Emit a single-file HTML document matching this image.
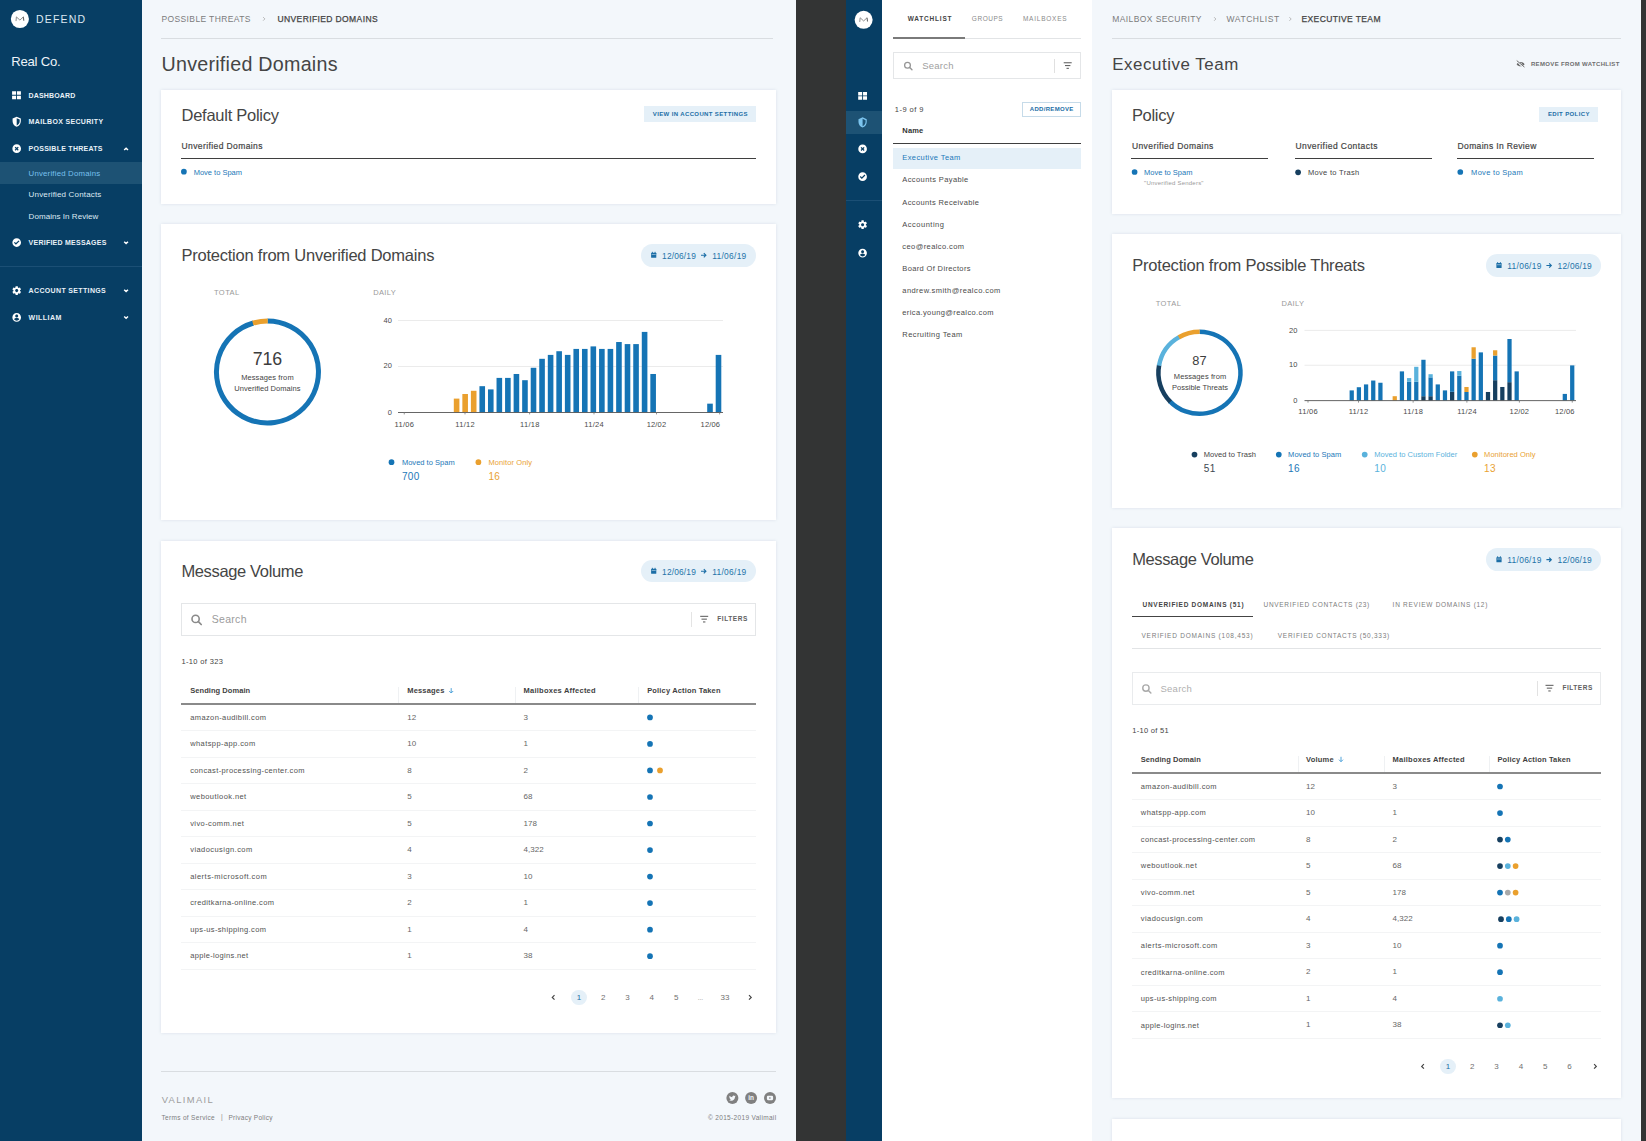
<!DOCTYPE html>
<html lang="en"><head><meta charset="utf-8"><title>Valimail Defend</title>
<style>
html,body{margin:0;padding:0}
body{width:1646px;height:1141px;overflow:hidden;position:relative;background:#333434;font-family:"Liberation Sans",sans-serif;}
#root{position:absolute;left:0;top:0;width:1646px;height:1141px;overflow:hidden}
#root>div,#root>span,#root>svg{position:absolute;display:block}
#root>span{white-space:nowrap}
svg{overflow:visible}
</style></head>
<body><div id="root">
<div style="left:0.00px;top:0.00px;width:796.00px;height:1141.00px;background:#f3f7fb;"></div>
<div style="left:0.00px;top:0.00px;width:141.50px;height:1141.00px;background:#073e64;"></div>
<svg style="left:9px;top:8px;" width="21" height="22" viewBox="-10.9000 -11.0000 21.0000 22.0000"><circle cx="0" cy="0" r="9.05" fill="#fff"/><path d="M-3.900 2.100-3.500-2.100 0 1.100 3.400-2.100" fill="none" stroke="#909090" stroke-width="1"/><path d="M3.400-2.100 3.900 1.700" fill="none" stroke="#666" stroke-width="1.100"/></svg>
<span style="top:11.80px;font-size:10.5px;line-height:15px;color:#dde8f1;letter-spacing:1.166px;left:36.10px;">DEFEND</span>
<span style="top:53.20px;font-size:13.1px;line-height:18px;color:#eef4f9;letter-spacing:-0.236px;left:11.30px;">Real Co.</span>
<div style="left:0.00px;top:162.40px;width:141.50px;height:21.80px;background:#1d5274;"></div>
<div style="left:0.00px;top:266.00px;width:141.50px;height:1.00px;background:#1b4f75;"></div>
<svg style="left:10px;top:89px;" width="13" height="13" viewBox="-2.7170 -2.2642 29.4340 29.4340"><g fill="#fff"><path d="M2 3h9v8H2zM13 3h9v8h-9zM2 13h9v8H2zM13 13h9v8h-9z"/></g></svg>
<span style="top:90.50px;font-size:7px;line-height:10px;color:#e9f1f8;font-weight:700;letter-spacing:0.138px;left:28.60px;">DASHBOARD</span>
<svg style="left:10px;top:115px;" width="14" height="14" viewBox="-2.6182 -2.8364 30.5455 30.5455"><g fill="#fff"><path d="M12 1 3 5v6c0 5.6 3.8 10.7 9 12 5.200-1.300 9-6.400 9-12V5l-9-4zm0 3.200 6.500 2.900V11c0 4.100-2.700 8-6.500 9.300V4.200z"/></g></svg>
<span style="top:116.70px;font-size:7px;line-height:10px;color:#e9f1f8;font-weight:700;letter-spacing:0.325px;left:28.60px;">MAILBOX SECURITY</span>
<svg style="left:10px;top:142px;" width="13" height="13" viewBox="-3.4615 -3.4615 30.0000 30.0000"><g fill="#fff"><path d="M12 2C6.480 2 2 6.480 2 12s4.480 10 10 10 10-4.480 10-10S17.520 2 12 2zm4.600 12.500-2.100 2.100L12 14.100l-2.500 2.500-2.100-2.100L9.900 12 7.400 9.500l2.100-2.100L12 9.900l2.500-2.500 2.100 2.100L14.100 12z"/></g></svg>
<span style="top:143.50px;font-size:7px;line-height:10px;color:#e9f1f8;font-weight:700;letter-spacing:0.267px;left:28.60px;">POSSIBLE THREATS</span>
<svg style="left:120px;top:143px;" width="13" height="13" viewBox="-6.1000 -6.1000 13.0000 13.0000"><path d="M-1.9 0.95 L0 -0.95 L1.9 0.95" fill="none" stroke="#fff" stroke-width="1.4"/></svg>
<span style="top:167.50px;font-size:7.8px;line-height:11px;color:#78c0ee;letter-spacing:0.203px;left:28.60px;">Unverified Domains</span>
<span style="top:189.00px;font-size:8px;line-height:12px;color:#dde9f3;letter-spacing:0.160px;left:28.60px;">Unverified Contacts</span>
<span style="top:211.10px;font-size:8px;line-height:12px;color:#dde9f3;letter-spacing:0.049px;left:28.60px;">Domains In Review</span>
<svg style="left:10px;top:236px;" width="13" height="13" viewBox="-3.4615 -3.2308 30.0000 30.0000"><g fill="#fff"><path d="M12 2C6.480 2 2 6.480 2 12s4.480 10 10 10 10-4.480 10-10S17.520 2 12 2zm-1.800 15.200-4.600-4.600 2-2 2.600 2.600 6.200-6.200 2 2z"/></g></svg>
<span style="top:237.70px;font-size:7px;line-height:10px;color:#e9f1f8;font-weight:700;letter-spacing:0.243px;left:28.60px;">VERIFIED MESSAGES</span>
<svg style="left:120px;top:236px;" width="13" height="13" viewBox="-6.1000 -6.6000 13.0000 13.0000"><path d="M-1.9 -0.95 L0 0.95 L1.9 -0.95" fill="none" stroke="#fff" stroke-width="1.4"/></svg>
<svg style="left:10px;top:284px;" width="13" height="13" viewBox="-3.1698 -2.9434 29.4340 29.4340"><g fill="#fff"><path d="M19.430 12.980c.040-.320.070-.640.070-.980s-.030-.660-.070-.980l2.110-1.650c.190-.150.240-.420.120-.640l-2-3.460c-.120-.220-.390-.300-.610-.220l-2.490 1c-.520-.400-1.080-.730-1.690-.980l-.380-2.650C14.460 2.180 14.250 2 14 2h-4c-.250 0-.460.180-.490.420l-.380 2.650c-.610.250-1.170.590-1.690.980l-2.490-1c-.230-.090-.490 0-.610.220l-2 3.460c-.130.220-.070.490.120.640l2.110 1.650c-.040.320-.070.650-.070.980s.030.660.070.980l-2.110 1.650c-.190.150-.240.420-.120.640l2 3.460c.120.220.390.300.610.220l2.490-1c.520.400 1.080.730 1.690.980l.380 2.650c.030.240.240.420.490.420h4c.250 0 .460-.180.490-.420l.380-2.650c.610-.250 1.170-.590 1.690-.980l2.490 1c.230.090.490 0 .610-.220l2-3.460c.120-.220.070-.490-.120-.640l-2.110-1.650zM12 15.500c-1.930 0-3.500-1.570-3.500-3.500s1.570-3.500 3.500-3.500 3.500 1.570 3.500 3.500-1.570 3.500-3.500 3.500z"/></g></svg>
<span style="top:285.70px;font-size:7px;line-height:10px;color:#e9f1f8;font-weight:700;letter-spacing:0.350px;left:28.60px;">ACCOUNT SETTINGS</span>
<svg style="left:120px;top:284px;" width="13" height="13" viewBox="-6.1000 -6.6000 13.0000 13.0000"><path d="M-1.9 -0.95 L0 0.95 L1.9 -0.95" fill="none" stroke="#fff" stroke-width="1.4"/></svg>
<svg style="left:10px;top:311px;" width="13" height="13" viewBox="-3.4615 -2.7692 30.0000 30.0000"><g fill="#fff"><path d="M12 2C6.480 2 2 6.480 2 12s4.480 10 10 10 10-4.480 10-10S17.520 2 12 2zm0 3.500c1.930 0 3.500 1.570 3.500 3.500S13.930 12.500 12 12.500 8.500 10.930 8.500 9 10.070 5.500 12 5.500zm0 14.200c-2.500 0-4.710-1.280-6-3.220.030-1.990 4-3.080 6-3.080 1.990 0 5.970 1.090 6 3.080-1.290 1.940-3.500 3.220-6 3.220z"/></g></svg>
<span style="top:312.50px;font-size:7px;line-height:10px;color:#e9f1f8;font-weight:700;letter-spacing:0.477px;left:28.60px;">WILLIAM</span>
<svg style="left:120px;top:311px;" width="13" height="13" viewBox="-6.1000 -6.4000 13.0000 13.0000"><path d="M-1.9 -0.95 L0 0.95 L1.9 -0.95" fill="none" stroke="#fff" stroke-width="1.4"/></svg>
<span style="top:12.90px;font-size:8.5px;line-height:12px;color:#7b7b7b;letter-spacing:0.374px;left:161.50px;">POSSIBLE THREATS</span>
<svg style="left:258px;top:12px;" width="12" height="13" viewBox="-6.0000 -6.9000 12.0000 13.0000"><path d="M-0.9 -1.8 L0.9 0 L-0.9 1.8" fill="none" stroke="#aaa" stroke-width="0.8"/></svg>
<span style="top:12.90px;font-size:8.5px;line-height:12px;color:#444;letter-spacing:0.387px;left:277.50px;-webkit-text-stroke:0.25px #444;">UNVERIFIED DOMAINS</span>
<div style="left:161.00px;top:38.00px;width:612.00px;height:1.00px;background:#d9dde1;"></div>
<span style="top:50.50px;font-size:19.7px;line-height:26px;color:#454545;letter-spacing:0.247px;left:161.50px;">Unverified Domains</span>
<div style="left:161.30px;top:90.00px;width:614.90px;height:114.20px;background:#fff;box-shadow:0 0 3px rgba(150,170,190,.28);"></div>
<span style="top:104.00px;font-size:16.5px;line-height:22px;color:#454545;letter-spacing:-0.261px;left:181.50px;">Default Policy</span>
<div style="left:644.10px;top:106.40px;width:112.10px;height:15.50px;background:#e5f0f8;"></div>
<span style="top:109.70px;font-size:6px;line-height:9px;color:#1c6ea6;font-weight:700;letter-spacing:0.373px;left:652.80px;">VIEW IN ACCOUNT SETTINGS</span>
<span style="top:139.60px;font-size:8.5px;line-height:12px;color:#444;letter-spacing:0.402px;left:181.50px;-webkit-text-stroke:0.2px #444;">Unverified Domains</span>
<div style="left:181.00px;top:158.00px;width:575.00px;height:1.00px;background:#3f3f3f;"></div>
<svg style="left:178px;top:166px;" width="11" height="11" viewBox="-5.9000 -5.7000 11.0000 11.0000"><circle cx="0" cy="0" r="2.85" fill="#1574b5"/></svg>
<span style="top:166.50px;font-size:7.5px;line-height:11px;color:#1c78b8;letter-spacing:-0.005px;left:193.70px;">Move to Spam</span>
<div style="left:161.30px;top:223.50px;width:614.90px;height:296.20px;background:#fff;box-shadow:0 0 3px rgba(150,170,190,.28);"></div>
<span style="top:244.00px;font-size:16.5px;line-height:22px;color:#454545;letter-spacing:-0.225px;left:181.40px;">Protection from Unverified Domains</span>
<div style="left:641.00px;top:243.70px;width:114.90px;height:23.00px;background:#e5f0f8;border-radius:11.5px;"></div>
<svg style="left:648px;top:250px;" width="11" height="10" viewBox="-5.7000 -5.0000 11.0000 10.0000"><g fill="#1c6ea6"><rect x="-2.600" y="-2.200" width="5.200" height="5" rx="0.500"/><rect x="-1.800" y="-3.200" width="0.900" height="1.600"/><rect x="0.900" y="-3.200" width="0.900" height="1.600"/></g><rect x="-2" y="-0.700" width="4" height="0.500" fill="#e5f0f8"/></svg>
<span style="top:249.60px;font-size:8.4px;line-height:12px;color:#2373a8;letter-spacing:0.156px;left:662.10px;">12/06/19</span>
<svg style="left:698px;top:250px;" width="11" height="11" viewBox="-5.6000 -5.2000 11.0000 11.0000"><path d="M-2.600 0H2.200M0.200-2.100 2.300 0 0.200 2.100" fill="none" stroke="#1c6ea6" stroke-width="1.150"/></svg>
<span style="top:249.60px;font-size:8.4px;line-height:12px;color:#2373a8;letter-spacing:0.302px;left:712.20px;">11/06/19</span>
<span style="top:287.30px;font-size:7.5px;line-height:11px;color:#9a9a9a;letter-spacing:0.429px;left:214.00px;">TOTAL</span>
<span style="top:287.30px;font-size:7.5px;line-height:11px;color:#9a9a9a;letter-spacing:0.344px;left:373.20px;">DAILY</span>
<svg style="left:206px;top:311px;" width="122" height="122" viewBox="-1.0000 -1.0000 122.0000 122.0000"><path d="M60.45 9.00A51 51 0 1 1 46.39 10.98" fill="none" stroke="#1574b5" stroke-width="5"/><path d="M45.88 11.13A51 51 0 0 1 60.72 9.00" fill="none" stroke="#eaa02e" stroke-width="5"/></svg>
<span style="top:347.80px;font-size:17.8px;line-height:23px;color:#3d3d3d;letter-spacing:-0.136px;left:267.43px;transform:translateX(-50%);">716</span>
<span style="top:371.70px;font-size:7.5px;line-height:11px;color:#444;letter-spacing:0.102px;left:267.45px;transform:translateX(-50%);">Messages from</span>
<span style="top:382.70px;font-size:7.5px;line-height:11px;color:#444;letter-spacing:0.044px;left:267.42px;transform:translateX(-50%);">Unverified Domains</span>
<svg style="left:-1px;top:-1px;" width="798" height="522" viewBox="-1.0000 -1.0000 798.0000 522.0000"><rect x="398" y="320.200" width="325" height="0.800" fill="#e6e6e6"/><rect x="398" y="366.100" width="325" height="0.800" fill="#e6e6e6"/><rect x="453.80" y="398.60" width="5.600" height="13.80" fill="#eaa02e"/><rect x="462.35" y="394.00" width="5.600" height="18.40" fill="#eaa02e"/><rect x="470.89" y="390.78" width="5.600" height="21.62" fill="#eaa02e"/><rect x="479.44" y="386.18" width="5.600" height="26.22" fill="#1574b5"/><rect x="487.98" y="389.40" width="5.600" height="23.00" fill="#1574b5"/><rect x="496.53" y="377.90" width="5.600" height="34.50" fill="#1574b5"/><rect x="505.07" y="377.90" width="5.600" height="34.50" fill="#1574b5"/><rect x="513.62" y="373.99" width="5.600" height="38.41" fill="#1574b5"/><rect x="522.16" y="380.20" width="5.600" height="32.20" fill="#1574b5"/><rect x="530.71" y="367.78" width="5.600" height="44.62" fill="#1574b5"/><rect x="539.25" y="358.81" width="5.600" height="53.59" fill="#1574b5"/><rect x="547.80" y="354.90" width="5.600" height="57.50" fill="#1574b5"/><rect x="556.34" y="351.22" width="5.600" height="61.18" fill="#1574b5"/><rect x="564.88" y="354.90" width="5.600" height="57.50" fill="#1574b5"/><rect x="573.43" y="348.92" width="5.600" height="63.48" fill="#1574b5"/><rect x="581.98" y="348.92" width="5.600" height="63.48" fill="#1574b5"/><rect x="590.52" y="346.39" width="5.600" height="66.01" fill="#1574b5"/><rect x="599.07" y="348.92" width="5.600" height="63.48" fill="#1574b5"/><rect x="607.61" y="348.92" width="5.600" height="63.48" fill="#1574b5"/><rect x="616.15" y="342.02" width="5.600" height="70.38" fill="#1574b5"/><rect x="624.70" y="344.09" width="5.600" height="68.31" fill="#1574b5"/><rect x="633.25" y="344.09" width="5.600" height="68.31" fill="#1574b5"/><rect x="641.79" y="331.90" width="5.600" height="80.50" fill="#1574b5"/><rect x="650.34" y="373.99" width="5.600" height="38.41" fill="#1574b5"/><rect x="707.20" y="403.66" width="5.600" height="8.74" fill="#1574b5"/><rect x="715.70" y="354.90" width="5.600" height="57.50" fill="#1574b5"/><rect x="398" y="412.0" width="325" height="0.900" fill="#555"/><rect x="403.8" y="412.4" width="0.800" height="2" fill="#777"/><rect x="464.6" y="412.4" width="0.800" height="2" fill="#777"/><rect x="529.3000000000001" y="412.4" width="0.800" height="2" fill="#777"/><rect x="593.6" y="412.4" width="0.800" height="2" fill="#777"/><rect x="656.0" y="412.4" width="0.800" height="2" fill="#777"/><rect x="719.3000000000001" y="412.4" width="0.800" height="2" fill="#777"/></svg>
<span style="top:315.10px;font-size:7.5px;line-height:11px;color:#4a4a4a;left:391.90px;transform:translateX(-100%);">40</span>
<span style="top:360.40px;font-size:7.5px;line-height:11px;color:#4a4a4a;left:391.90px;transform:translateX(-100%);">20</span>
<span style="top:407.00px;font-size:7.5px;line-height:11px;color:#4a4a4a;left:391.90px;transform:translateX(-100%);">0</span>
<span style="top:419.00px;font-size:7.5px;line-height:11px;color:#4a4a4a;letter-spacing:0.320px;left:404.36px;transform:translateX(-50%);">11/06</span>
<span style="top:419.00px;font-size:7.5px;line-height:11px;color:#4a4a4a;letter-spacing:0.320px;left:465.16px;transform:translateX(-50%);">11/12</span>
<span style="top:419.00px;font-size:7.5px;line-height:11px;color:#4a4a4a;letter-spacing:0.320px;left:529.86px;transform:translateX(-50%);">11/18</span>
<span style="top:419.00px;font-size:7.5px;line-height:11px;color:#4a4a4a;letter-spacing:0.320px;left:594.16px;transform:translateX(-50%);">11/24</span>
<span style="top:419.00px;font-size:7.5px;line-height:11px;color:#4a4a4a;letter-spacing:0.180px;left:656.49px;transform:translateX(-50%);">12/02</span>
<span style="top:419.00px;font-size:7.5px;line-height:11px;color:#4a4a4a;letter-spacing:0.180px;left:710.39px;transform:translateX(-50%);">12/06</span>
<svg style="left:386px;top:457px;" width="11" height="11" viewBox="-5.5000 -5.2000 11.0000 11.0000"><circle cx="0" cy="0" r="2.85" fill="#1574b5"/></svg>
<span style="top:457.00px;font-size:7.5px;line-height:11px;color:#1c78b8;letter-spacing:0.022px;left:401.90px;">Moved to Spam</span>
<span style="top:469.50px;font-size:10px;line-height:14px;color:#1c78b8;letter-spacing:0.406px;left:401.90px;">700</span>
<svg style="left:473px;top:457px;" width="11" height="11" viewBox="-5.4000 -5.2000 11.0000 11.0000"><circle cx="0" cy="0" r="2.85" fill="#eaa02e"/></svg>
<span style="top:457.00px;font-size:7.5px;line-height:11px;color:#e9a233;letter-spacing:0.099px;left:488.40px;">Monitor Only</span>
<span style="top:469.50px;font-size:10px;line-height:14px;color:#e9a233;letter-spacing:0.375px;left:488.40px;">16</span>
<div style="left:161.30px;top:540.50px;width:614.90px;height:492.10px;background:#fff;box-shadow:0 0 3px rgba(150,170,190,.28);"></div>
<span style="top:560.30px;font-size:16.5px;line-height:22px;color:#454545;letter-spacing:-0.352px;left:181.40px;">Message Volume</span>
<div style="left:641.00px;top:559.90px;width:114.90px;height:22.60px;background:#e5f0f8;border-radius:11.3px;"></div>
<svg style="left:648px;top:566px;" width="11" height="10" viewBox="-5.7000 -5.0000 11.0000 10.0000"><g fill="#1c6ea6"><rect x="-2.600" y="-2.200" width="5.200" height="5" rx="0.500"/><rect x="-1.800" y="-3.200" width="0.900" height="1.600"/><rect x="0.900" y="-3.200" width="0.900" height="1.600"/></g><rect x="-2" y="-0.700" width="4" height="0.500" fill="#e5f0f8"/></svg>
<span style="top:565.60px;font-size:8.4px;line-height:12px;color:#2373a8;letter-spacing:0.156px;left:662.10px;">12/06/19</span>
<svg style="left:698px;top:566px;" width="11" height="11" viewBox="-5.6000 -5.2000 11.0000 11.0000"><path d="M-2.600 0H2.200M0.200-2.100 2.300 0 0.200 2.100" fill="none" stroke="#1c6ea6" stroke-width="1.150"/></svg>
<span style="top:565.60px;font-size:8.4px;line-height:12px;color:#2373a8;letter-spacing:0.302px;left:712.20px;">11/06/19</span>
<div style="left:181.00px;top:603.00px;width:575.00px;height:33.00px;background:#fff;box-sizing:border-box;border:1px solid #e4e6e8;"></div>
<svg style="left:189px;top:612px;" width="15" height="15" viewBox="-7.6000 -7.9000 15.0000 15.0000"><g transform="scale(1.0)"><circle cx="-1" cy="-1" r="3.600" fill="none" stroke="#8a8a8a" stroke-width="1.600"/><path d="M1.800 1.800 4.600 4.600" stroke="#8a8a8a" stroke-width="1.700" stroke-linecap="round"/></g></svg>
<span style="top:611.70px;font-size:10.5px;line-height:15px;color:#9b9b9b;letter-spacing:0.304px;left:211.70px;">Search</span>
<div style="left:691.30px;top:612.00px;width:1.00px;height:15.00px;background:#e4e4e4;"></div>
<svg style="left:698px;top:613px;" width="13" height="13" viewBox="-6.2000 -6.2000 13.0000 13.0000"><g fill="#666"><rect x="-4" y="-3.400" width="8" height="1.100"/><rect x="-2.700" y="-0.600" width="5.400" height="1.100"/><rect x="-1.200" y="2.200" width="2.400" height="1.100"/></g></svg>
<span style="top:614.20px;font-size:6.5px;line-height:10px;color:#606060;font-weight:700;letter-spacing:0.598px;left:717.20px;">FILTERS</span>
<span style="top:655.50px;font-size:7.5px;line-height:11px;color:#444;letter-spacing:0.355px;left:181.40px;">1-10 of 323</span>
<span style="top:685.00px;font-size:7.5px;line-height:11px;color:#3f3f3f;font-weight:700;letter-spacing:0.064px;left:190.20px;">Sending Domain</span>
<span style="top:685.00px;font-size:7.5px;line-height:11px;color:#3f3f3f;font-weight:700;letter-spacing:0.192px;left:407.20px;">Messages</span>
<span style="top:685.00px;font-size:7.5px;line-height:11px;color:#3f3f3f;font-weight:700;letter-spacing:0.231px;left:523.60px;">Mailboxes Affected</span>
<span style="top:685.00px;font-size:7.5px;line-height:11px;color:#3f3f3f;font-weight:700;letter-spacing:0.159px;left:647.20px;">Policy Action Taken</span>
<div style="left:181.40px;top:702.80px;width:574.50px;height:2.00px;background:#8a8a8a;"></div>
<div style="left:398.40px;top:686.80px;width:1.00px;height:16.00px;background:#eff1f3;"></div>
<div style="left:514.80px;top:686.80px;width:1.00px;height:16.00px;background:#eff1f3;"></div>
<div style="left:638.40px;top:686.80px;width:1.00px;height:16.00px;background:#eff1f3;"></div>
<span style="top:711.70px;font-size:7.5px;line-height:11px;color:#525252;letter-spacing:0.389px;left:190.20px;">amazon-audibill.com</span>
<span style="top:711.50px;font-size:8px;line-height:12px;color:#666;left:407.20px;">12</span>
<span style="top:711.50px;font-size:8px;line-height:12px;color:#666;left:523.60px;">3</span>
<svg style="left:645px;top:712px;" width="10" height="11" viewBox="-5.0000 -5.4000 10.0000 11.0000"><circle cx="0" cy="0" r="2.85" fill="#1574b5"/></svg>
<div style="left:181.40px;top:730.20px;width:574.50px;height:1.00px;background:#f3f4f5;"></div>
<span style="top:738.23px;font-size:7.5px;line-height:11px;color:#525252;letter-spacing:0.414px;left:190.20px;">whatspp-app.com</span>
<span style="top:738.03px;font-size:8px;line-height:12px;color:#666;left:407.20px;">10</span>
<span style="top:738.03px;font-size:8px;line-height:12px;color:#666;left:523.60px;">1</span>
<svg style="left:645px;top:738px;" width="10" height="11" viewBox="-5.0000 -5.9300 10.0000 11.0000"><circle cx="0" cy="0" r="2.85" fill="#1574b5"/></svg>
<div style="left:181.40px;top:756.73px;width:574.50px;height:1.00px;background:#f3f4f5;"></div>
<span style="top:764.76px;font-size:7.5px;line-height:11px;color:#525252;letter-spacing:0.375px;left:190.20px;">concast-processing-center.com</span>
<span style="top:764.56px;font-size:8px;line-height:12px;color:#666;left:407.20px;">8</span>
<span style="top:764.56px;font-size:8px;line-height:12px;color:#666;left:523.60px;">2</span>
<svg style="left:645px;top:765px;" width="10" height="11" viewBox="-5.0000 -5.4600 10.0000 11.0000"><circle cx="0" cy="0" r="2.85" fill="#1574b5"/></svg>
<svg style="left:655px;top:765px;" width="10" height="11" viewBox="-5.0000 -5.4600 10.0000 11.0000"><circle cx="0" cy="0" r="2.85" fill="#eaa02e"/></svg>
<div style="left:181.40px;top:783.26px;width:574.50px;height:1.00px;background:#f3f4f5;"></div>
<span style="top:791.29px;font-size:7.5px;line-height:11px;color:#525252;letter-spacing:0.427px;left:190.20px;">weboutlook.net</span>
<span style="top:791.09px;font-size:8px;line-height:12px;color:#666;left:407.20px;">5</span>
<span style="top:791.09px;font-size:8px;line-height:12px;color:#666;left:523.60px;">68</span>
<svg style="left:645px;top:791px;" width="10" height="11" viewBox="-5.0000 -5.9900 10.0000 11.0000"><circle cx="0" cy="0" r="2.85" fill="#1574b5"/></svg>
<div style="left:181.40px;top:809.79px;width:574.50px;height:1.00px;background:#f3f4f5;"></div>
<span style="top:817.82px;font-size:7.5px;line-height:11px;color:#525252;letter-spacing:0.403px;left:190.20px;">vivo-comm.net</span>
<span style="top:817.62px;font-size:8px;line-height:12px;color:#666;left:407.20px;">5</span>
<span style="top:817.62px;font-size:8px;line-height:12px;color:#666;left:523.60px;">178</span>
<svg style="left:645px;top:818px;" width="10" height="11" viewBox="-5.0000 -5.5200 10.0000 11.0000"><circle cx="0" cy="0" r="2.85" fill="#1574b5"/></svg>
<div style="left:181.40px;top:836.32px;width:574.50px;height:1.00px;background:#f3f4f5;"></div>
<span style="top:844.35px;font-size:7.5px;line-height:11px;color:#525252;letter-spacing:0.438px;left:190.20px;">viadocusign.com</span>
<span style="top:844.15px;font-size:8px;line-height:12px;color:#666;left:407.20px;">4</span>
<span style="top:844.15px;font-size:8px;line-height:12px;color:#666;left:523.60px;">4,322</span>
<svg style="left:645px;top:845px;" width="10" height="11" viewBox="-5.0000 -5.0500 10.0000 11.0000"><circle cx="0" cy="0" r="2.85" fill="#1574b5"/></svg>
<div style="left:181.40px;top:862.85px;width:574.50px;height:1.00px;background:#f3f4f5;"></div>
<span style="top:870.88px;font-size:7.5px;line-height:11px;color:#525252;letter-spacing:0.473px;left:190.20px;">alerts-microsoft.com</span>
<span style="top:870.68px;font-size:8px;line-height:12px;color:#666;left:407.20px;">3</span>
<span style="top:870.68px;font-size:8px;line-height:12px;color:#666;left:523.60px;">10</span>
<svg style="left:645px;top:871px;" width="10" height="11" viewBox="-5.0000 -5.5800 10.0000 11.0000"><circle cx="0" cy="0" r="2.85" fill="#1574b5"/></svg>
<div style="left:181.40px;top:889.38px;width:574.50px;height:1.00px;background:#f3f4f5;"></div>
<span style="top:897.41px;font-size:7.5px;line-height:11px;color:#525252;letter-spacing:0.377px;left:190.20px;">creditkarna-online.com</span>
<span style="top:897.21px;font-size:8px;line-height:12px;color:#666;left:407.20px;">2</span>
<span style="top:897.21px;font-size:8px;line-height:12px;color:#666;left:523.60px;">1</span>
<svg style="left:645px;top:898px;" width="10" height="11" viewBox="-5.0000 -5.1100 10.0000 11.0000"><circle cx="0" cy="0" r="2.85" fill="#1574b5"/></svg>
<div style="left:181.40px;top:915.91px;width:574.50px;height:1.00px;background:#f3f4f5;"></div>
<span style="top:923.94px;font-size:7.5px;line-height:11px;color:#525252;letter-spacing:0.366px;left:190.20px;">ups-us-shipping.com</span>
<span style="top:923.74px;font-size:8px;line-height:12px;color:#666;left:407.20px;">1</span>
<span style="top:923.74px;font-size:8px;line-height:12px;color:#666;left:523.60px;">4</span>
<svg style="left:645px;top:924px;" width="10" height="11" viewBox="-5.0000 -5.6400 10.0000 11.0000"><circle cx="0" cy="0" r="2.85" fill="#1574b5"/></svg>
<div style="left:181.40px;top:942.44px;width:574.50px;height:1.00px;background:#f3f4f5;"></div>
<span style="top:950.47px;font-size:7.5px;line-height:11px;color:#525252;letter-spacing:0.335px;left:190.20px;">apple-logins.net</span>
<span style="top:950.27px;font-size:8px;line-height:12px;color:#666;left:407.20px;">1</span>
<span style="top:950.27px;font-size:8px;line-height:12px;color:#666;left:523.60px;">38</span>
<svg style="left:645px;top:951px;" width="10" height="11" viewBox="-5.0000 -5.1700 10.0000 11.0000"><circle cx="0" cy="0" r="2.85" fill="#1574b5"/></svg>
<div style="left:181.40px;top:968.97px;width:574.50px;height:1.00px;background:#f3f4f5;"></div>
<svg style="left:446px;top:685px;" width="11" height="11" viewBox="-5.2000 -5.7000 11.0000 11.0000"><path d="M0-2.600V2.200M-2 0.300 0 2.300 2 0.300" fill="none" stroke="#3e9ad6" stroke-width="0.900"/></svg>
<svg style="left:547px;top:991px;" width="13" height="13" viewBox="-6.4000 -6.4000 13.0000 13.0000"><path d="M1.1 -2.2 L-1.1 0 L1.1 2.2" fill="none" stroke="#444" stroke-width="1.2"/></svg>
<div style="left:571.30px;top:989.70px;width:15.40px;height:15.40px;background:#e5f0f8;border-radius:50%;"></div>
<span style="top:991.80px;font-size:8px;line-height:12px;color:#1c6ea6;left:579.00px;transform:translateX(-50%);">1</span>
<span style="top:991.80px;font-size:8px;line-height:12px;color:#707070;left:603.20px;transform:translateX(-50%);">2</span>
<span style="top:991.80px;font-size:8px;line-height:12px;color:#707070;left:627.50px;transform:translateX(-50%);">3</span>
<span style="top:991.80px;font-size:8px;line-height:12px;color:#707070;left:651.80px;transform:translateX(-50%);">4</span>
<span style="top:991.80px;font-size:8px;line-height:12px;color:#707070;left:676.30px;transform:translateX(-50%);">5</span>
<span style="top:991.80px;font-size:8px;line-height:12px;color:#707070;left:724.90px;transform:translateX(-50%);">33</span>
<span style="top:992.90px;font-size:6.5px;line-height:10px;color:#999;left:700.40px;transform:translateX(-50%);">...</span>
<svg style="left:744px;top:991px;" width="13" height="13" viewBox="-6.1000 -6.4000 13.0000 13.0000"><path d="M-1.1 -2.2 L1.1 0 L-1.1 2.2" fill="none" stroke="#444" stroke-width="1.2"/></svg>
<div style="left:161.00px;top:1071.00px;width:615.00px;height:1.00px;background:#d9dde1;"></div>
<span style="top:1092.70px;font-size:9.4px;line-height:13px;color:#9c9c9c;letter-spacing:1.355px;left:161.70px;">VALIMAIL</span>
<span style="top:1112.50px;font-size:6.5px;line-height:10px;color:#7d7d7d;letter-spacing:0.320px;left:161.50px;">Terms of Service</span>
<span style="top:1112.20px;font-size:6.5px;line-height:10px;color:#8a8a8a;left:220.90px;">|</span>
<span style="top:1112.50px;font-size:6.5px;line-height:10px;color:#7d7d7d;letter-spacing:0.272px;left:228.50px;">Privacy Policy</span>
<span style="top:1112.50px;font-size:6.5px;line-height:10px;color:#7d7d7d;letter-spacing:0.333px;left:776.43px;transform:translateX(-100%);">© 2015-2019 Valimail</span>
<svg style="left:724px;top:1090px;" width="17" height="16" viewBox="-8.4000 -8.0000 17.0000 16.0000"><circle cx="0" cy="0" r="6" fill="#808080"/></svg>
<svg style="left:743px;top:1090px;" width="17" height="16" viewBox="-8.1000 -8.0000 17.0000 16.0000"><circle cx="0" cy="0" r="6" fill="#808080"/></svg>
<svg style="left:762px;top:1090px;" width="16" height="16" viewBox="-8.0000 -8.0000 16.0000 16.0000"><circle cx="0" cy="0" r="6" fill="#808080"/></svg>
<svg style="left:724px;top:1090px;" width="17" height="16" viewBox="-8.4000 -8.0000 17.0000 16.0000"><g transform="translate(-3.300 -3.150) scale(0.275)"><path d="M23.953 4.570a10 10 0 01-2.825.775 4.958 4.958 0 002.163-2.723c-.951.555-2.005.959-3.127 1.184a4.920 4.920 0 00-8.384 4.482C7.690 8.095 4.067 6.130 1.640 3.162a4.822 4.822 0 00-.666 2.475c0 1.710.870 3.213 2.188 4.096a4.904 4.904 0 01-2.228-.616v.060a4.923 4.923 0 003.946 4.827 4.996 4.996 0 01-2.212.085 4.936 4.936 0 004.604 3.417 9.867 9.867 0 01-6.102 2.105c-.390 0-.779-.023-1.170-.067a13.995 13.995 0 007.557 2.209c9.053 0 13.998-7.496 13.998-13.985 0-.210 0-.420-.015-.630A9.935 9.935 0 0024 4.590z" fill="#f3f7fb"/></g></svg>
<span style="top:1093.10px;font-size:6.5px;line-height:10px;color:#f3f7fb;font-weight:700;left:751.20px;transform:translateX(-50%);">in</span>
<svg style="left:762px;top:1090px;" width="16" height="16" viewBox="-8.0000 -8.0000 16.0000 16.0000"><rect x="-3.100" y="-2.200" width="6.200" height="4.400" rx="1.100" fill="#f3f7fb"/><path d="M-0.700-1.100v2.200l1.900-1.100z" fill="#808080"/></svg>
<div style="left:880.00px;top:0.00px;width:212.00px;height:1141.00px;background:#fff;"></div>
<div style="left:846.00px;top:0.00px;width:36.20px;height:1141.00px;background:#073e64;"></div>
<div style="left:1092.00px;top:0.00px;width:549.00px;height:1141.00px;background:#f3f7fb;"></div>
<svg style="left:853px;top:9px;" width="21" height="21" viewBox="-10.6500 -10.8500 21.0000 21.0000"><circle cx="0" cy="0" r="9" fill="#fff"/><path d="M-3.900 2.100-3.500-2.100 0 1.100 3.400-2.100" fill="none" stroke="#909090" stroke-width="1"/><path d="M3.400-2.100 3.900 1.700" fill="none" stroke="#666" stroke-width="1.100"/></svg>
<div style="left:846.00px;top:111.40px;width:36.20px;height:22.40px;background:#1d5274;"></div>
<div style="left:846.00px;top:199.80px;width:36.20px;height:1.00px;background:#1b4f75;"></div>
<svg style="left:856px;top:89px;" width="13" height="14" viewBox="-2.9434 -3.6226 29.4340 31.6981"><g fill="#fff"><path d="M2 3h9v8H2zM13 3h9v8h-9zM2 13h9v8H2zM13 13h9v8h-9z"/></g></svg>
<svg style="left:856px;top:115px;" width="14" height="14" viewBox="-2.4000 -4.1455 30.5455 30.5455"><g fill="#7cc4ee"><path d="M12 1 3 5v6c0 5.6 3.8 10.7 9 12 5.200-1.300 9-6.400 9-12V5l-9-4zm0 3.200 6.500 2.900V11c0 4.100-2.700 8-6.500 9.300V4.200z"/></g></svg>
<svg style="left:856px;top:142px;" width="13" height="14" viewBox="-3.2308 -3.9231 30.0000 32.3077"><g fill="#fff"><path d="M12 2C6.480 2 2 6.480 2 12s4.480 10 10 10 10-4.480 10-10S17.520 2 12 2zm4.600 12.500-2.100 2.100L12 14.100l-2.500 2.500-2.100-2.100L9.900 12 7.400 9.500l2.100-2.100L12 9.900l2.500-2.500 2.100 2.100L14.100 12z"/></g></svg>
<svg style="left:856px;top:170px;" width="13" height="13" viewBox="-3.2308 -3.4615 30.0000 30.0000"><g fill="#fff"><path d="M12 2C6.480 2 2 6.480 2 12s4.480 10 10 10 10-4.480 10-10S17.520 2 12 2zm-1.800 15.200-4.600-4.600 2-2 2.600 2.600 6.200-6.200 2 2z"/></g></svg>
<svg style="left:856px;top:218px;" width="13" height="13" viewBox="-2.9434 -3.1698 29.4340 29.4340"><g fill="#fff"><path d="M19.430 12.980c.040-.320.070-.640.070-.980s-.030-.660-.070-.980l2.110-1.650c.190-.150.240-.420.120-.640l-2-3.460c-.120-.220-.390-.300-.610-.220l-2.490 1c-.520-.400-1.080-.730-1.690-.980l-.380-2.650C14.460 2.180 14.250 2 14 2h-4c-.250 0-.460.180-.490.420l-.380 2.650c-.610.250-1.170.590-1.690.980l-2.490-1c-.230-.090-.490 0-.610.220l-2 3.460c-.130.220-.070.490.120.640l2.110 1.650c-.040.320-.070.650-.070.980s.030.660.070.980l-2.110 1.650c-.190.150-.240.420-.120.640l2 3.460c.120.220.390.300.610.220l2.490-1c.520.400 1.080.730 1.690.980l.380 2.650c.030.240.240.420.490.420h4c.250 0 .460-.180.490-.420l.380-2.650c.610-.250 1.170-.590 1.690-.980l2.490 1c.230.090.490 0 .610-.220l2-3.460c.120-.220.070-.490-.120-.640l-2.110-1.650zM12 15.500c-1.930 0-3.500-1.570-3.500-3.500s1.570-3.500 3.500-3.500 3.500 1.570 3.500 3.500-1.570 3.500-3.500 3.500z"/></g></svg>
<svg style="left:856px;top:246px;" width="13" height="14" viewBox="-3.2308 -4.3846 30.0000 32.3077"><g fill="#fff"><path d="M12 2C6.480 2 2 6.480 2 12s4.480 10 10 10 10-4.480 10-10S17.520 2 12 2zm0 3.500c1.930 0 3.500 1.570 3.500 3.500S13.930 12.500 12 12.500 8.500 10.930 8.500 9 10.070 5.500 12 5.500zm0 14.200c-2.500 0-4.710-1.280-6-3.220.030-1.990 4-3.080 6-3.080 1.990 0 5.970 1.090 6 3.080-1.290 1.940-3.500 3.220-6 3.220z"/></g></svg>
<span style="top:14.00px;font-size:6.5px;line-height:10px;color:#444;font-weight:700;letter-spacing:0.808px;left:907.70px;">WATCHLIST</span>
<span style="top:14.00px;font-size:6.5px;line-height:10px;color:#8a8a8a;letter-spacing:0.546px;left:971.80px;">GROUPS</span>
<span style="top:14.00px;font-size:6.5px;line-height:10px;color:#8a8a8a;letter-spacing:0.778px;left:1022.90px;">MAILBOXES</span>
<div style="left:965.00px;top:37.80px;width:116.00px;height:1.00px;background:#e2e4e6;"></div>
<div style="left:893.20px;top:37.20px;width:71.90px;height:2.00px;background:#7a7a7a;"></div>
<div style="left:893.00px;top:52.00px;width:188.00px;height:27.00px;background:#fff;box-sizing:border-box;border:1px solid #e4e6e8;"></div>
<svg style="left:901px;top:59px;" width="15" height="15" viewBox="-7.3000 -7.1000 15.0000 15.0000"><g transform="scale(0.8)"><circle cx="-1" cy="-1" r="3.600" fill="none" stroke="#959595" stroke-width="1.600"/><path d="M1.800 1.800 4.600 4.600" stroke="#959595" stroke-width="1.700" stroke-linecap="round"/></g></svg>
<span style="top:59.10px;font-size:9.5px;line-height:13px;color:#a0a0a0;letter-spacing:0.238px;left:922.20px;">Search</span>
<div style="left:1054.20px;top:58.50px;width:1.00px;height:14.00px;background:#e0e0e0;"></div>
<svg style="left:1061px;top:59px;" width="13" height="13" viewBox="-6.7000 -6.6000 13.0000 13.0000"><g fill="#666"><rect x="-4" y="-3.400" width="8" height="1.100"/><rect x="-2.700" y="-0.600" width="5.400" height="1.100"/><rect x="-1.200" y="2.200" width="2.400" height="1.100"/></g></svg>
<span style="top:104.00px;font-size:7.5px;line-height:11px;color:#444;letter-spacing:0.466px;left:894.80px;">1-9 of 9</span>
<div style="left:1022.20px;top:101.90px;width:58.70px;height:14.90px;background:#fff;box-sizing:border-box;border:1px solid #c6dbe9;"></div>
<span style="top:105.00px;font-size:6px;line-height:9px;color:#1c6ea6;font-weight:700;letter-spacing:0.314px;left:1051.66px;transform:translateX(-50%);">ADD/REMOVE</span>
<span style="top:124.90px;font-size:7.5px;line-height:11px;color:#333;font-weight:700;letter-spacing:0.188px;left:902.30px;">Name</span>
<div style="left:893.00px;top:143.00px;width:188.00px;height:1.00px;background:#3f3f3f;"></div>
<div style="left:893.20px;top:147.70px;width:187.70px;height:21.80px;background:#e5f0f8;"></div>
<span style="top:152.40px;font-size:7.5px;line-height:11px;color:#1c78b8;letter-spacing:0.399px;left:902.30px;">Executive Team</span>
<span style="top:174.48px;font-size:7.5px;line-height:11px;color:#4a4a4a;letter-spacing:0.397px;left:902.30px;">Accounts Payable</span>
<span style="top:196.56px;font-size:7.5px;line-height:11px;color:#4a4a4a;letter-spacing:0.370px;left:902.30px;">Accounts Receivable</span>
<span style="top:218.64px;font-size:7.5px;line-height:11px;color:#4a4a4a;letter-spacing:0.499px;left:902.30px;">Accounting</span>
<span style="top:240.72px;font-size:7.5px;line-height:11px;color:#4a4a4a;letter-spacing:0.416px;left:902.30px;">ceo@realco.com</span>
<span style="top:262.80px;font-size:7.5px;line-height:11px;color:#4a4a4a;letter-spacing:0.358px;left:902.30px;">Board Of Directors</span>
<span style="top:284.88px;font-size:7.5px;line-height:11px;color:#4a4a4a;letter-spacing:0.433px;left:902.30px;">andrew.smith@realco.com</span>
<span style="top:306.96px;font-size:7.5px;line-height:11px;color:#4a4a4a;letter-spacing:0.387px;left:902.30px;">erica.young@realco.com</span>
<span style="top:329.04px;font-size:7.5px;line-height:11px;color:#4a4a4a;letter-spacing:0.424px;left:902.30px;">Recruiting Team</span>
<span style="top:13.00px;font-size:8.5px;line-height:12px;color:#7b7b7b;letter-spacing:0.404px;left:1112.30px;">MAILBOX SECURITY</span>
<svg style="left:1209px;top:13px;" width="12" height="12" viewBox="-6.0000 -6.0000 12.0000 12.0000"><path d="M-0.9 -1.8 L0.9 0 L-0.9 1.8" fill="none" stroke="#aaa" stroke-width="0.8"/></svg>
<span style="top:13.00px;font-size:8.5px;line-height:12px;color:#7b7b7b;letter-spacing:0.566px;left:1226.50px;">WATCHLIST</span>
<svg style="left:1284px;top:13px;" width="13" height="12" viewBox="-6.3000 -6.0000 13.0000 12.0000"><path d="M-0.9 -1.8 L0.9 0 L-0.9 1.8" fill="none" stroke="#aaa" stroke-width="0.8"/></svg>
<span style="top:13.00px;font-size:8.5px;line-height:12px;color:#444;letter-spacing:0.385px;left:1301.50px;-webkit-text-stroke:0.25px #444;">EXECUTIVE TEAM</span>
<div style="left:1112.00px;top:38.00px;width:509.00px;height:1.00px;background:#d9dde1;"></div>
<span style="top:53.70px;font-size:16.9px;line-height:22px;color:#454545;letter-spacing:0.544px;left:1112.30px;">Executive Team</span>
<svg style="left:1514px;top:58px;" width="13" height="12" viewBox="-5.5000 -5.1667 10.8333 10.0000"><path d="M-3.300 0C-2-2.400 2-2.400 3.300 0 2 2.400-2 2.400-3.300 0z" fill="#666"/><circle r="1" fill="#f3f7fb"/><path d="M-3.200-2.600 3.200 2.800" stroke="#f3f7fb" stroke-width="1.600"/><path d="M-3.200-3 3.200 2.400" stroke="#666" stroke-width="0.800"/></svg>
<span style="top:59.80px;font-size:6px;line-height:9px;color:#6e6e6e;font-weight:700;letter-spacing:0.347px;left:1530.90px;">REMOVE FROM WATCHLIST</span>
<div style="left:1112.00px;top:89.90px;width:509.10px;height:124.30px;background:#fff;box-shadow:0 0 3px rgba(150,170,190,.28);"></div>
<span style="top:104.20px;font-size:16.5px;line-height:22px;color:#454545;letter-spacing:-0.303px;left:1131.90px;">Policy</span>
<div style="left:1539.30px;top:107.10px;width:58.80px;height:14.50px;background:#e5f0f8;"></div>
<span style="top:109.90px;font-size:6px;line-height:9px;color:#1c6ea6;font-weight:700;letter-spacing:0.383px;left:1568.89px;transform:translateX(-50%);">EDIT POLICY</span>
<span style="top:139.70px;font-size:8.5px;line-height:12px;color:#444;letter-spacing:0.425px;left:1131.90px;-webkit-text-stroke:0.2px #444;">Unverified Domains</span>
<div style="left:1131.00px;top:158.00px;width:137.00px;height:1.00px;background:#3f3f3f;"></div>
<span style="top:139.70px;font-size:8.5px;line-height:12px;color:#444;letter-spacing:0.440px;left:1295.40px;-webkit-text-stroke:0.2px #444;">Unverified Contacts</span>
<div style="left:1295.00px;top:158.00px;width:137.00px;height:1.00px;background:#3f3f3f;"></div>
<span style="top:139.70px;font-size:8.5px;line-height:12px;color:#444;letter-spacing:0.342px;left:1457.60px;-webkit-text-stroke:0.2px #444;">Domains In Review</span>
<div style="left:1457.00px;top:158.00px;width:137.00px;height:1.00px;background:#3f3f3f;"></div>
<svg style="left:1129px;top:167px;" width="11" height="10" viewBox="-5.6000 -5.0000 11.0000 10.0000"><circle cx="0" cy="0" r="2.85" fill="#1574b5"/></svg>
<span style="top:166.50px;font-size:7.5px;line-height:11px;color:#1c78b8;letter-spacing:-0.005px;left:1144.10px;">Move to Spam</span>
<span style="top:178.80px;font-size:6px;line-height:9px;color:#9a9a9a;letter-spacing:0.216px;left:1144.10px;">&quot;Unverified Senders&quot;</span>
<svg style="left:1293px;top:167px;" width="11" height="11" viewBox="-5.1000 -5.3000 11.0000 11.0000"><circle cx="0" cy="0" r="2.85" fill="#173f5f"/></svg>
<span style="top:166.80px;font-size:7.5px;line-height:11px;color:#444;letter-spacing:0.322px;left:1307.90px;">Move to Trash</span>
<svg style="left:1455px;top:167px;" width="11" height="10" viewBox="-5.3000 -5.0000 11.0000 10.0000"><circle cx="0" cy="0" r="2.85" fill="#1574b5"/></svg>
<span style="top:166.50px;font-size:7.5px;line-height:11px;color:#1c78b8;letter-spacing:0.304px;left:1471.10px;">Move to Spam</span>
<div style="left:1111.90px;top:234.00px;width:508.90px;height:274.00px;background:#fff;box-shadow:0 0 3px rgba(150,170,190,.28);"></div>
<span style="top:254.40px;font-size:16.5px;line-height:22px;color:#454545;letter-spacing:-0.202px;left:1132.20px;">Protection from Possible Threats</span>
<div style="left:1486.40px;top:254.20px;width:114.50px;height:22.60px;background:#e5f0f8;border-radius:11.3px;"></div>
<svg style="left:1494px;top:260px;" width="10" height="11" viewBox="-5.0000 -5.3000 10.0000 11.0000"><g fill="#1c6ea6"><rect x="-2.600" y="-2.200" width="5.200" height="5" rx="0.500"/><rect x="-1.800" y="-3.200" width="0.900" height="1.600"/><rect x="0.900" y="-3.200" width="0.900" height="1.600"/></g><rect x="-2" y="-0.700" width="4" height="0.500" fill="#e5f0f8"/></svg>
<span style="top:259.90px;font-size:8.4px;line-height:12px;color:#2373a8;letter-spacing:0.288px;left:1507.30px;">11/06/19</span>
<svg style="left:1544px;top:260px;" width="10" height="11" viewBox="-5.0000 -5.5000 10.0000 11.0000"><path d="M-2.600 0H2.200M0.200-2.100 2.300 0 0.200 2.100" fill="none" stroke="#1c6ea6" stroke-width="1.150"/></svg>
<span style="top:259.90px;font-size:8.4px;line-height:12px;color:#2373a8;letter-spacing:0.213px;left:1557.60px;">12/06/19</span>
<span style="top:297.60px;font-size:7.5px;line-height:11px;color:#9a9a9a;letter-spacing:0.429px;left:1155.70px;">TOTAL</span>
<span style="top:297.60px;font-size:7.5px;line-height:11px;color:#9a9a9a;letter-spacing:0.369px;left:1281.40px;">DAILY</span>
<svg style="left:1148px;top:321px;" width="102" height="102" viewBox="-1.0000 -1.0000 102.0000 102.0000"><path d="M50.45 9.75A41.05 41.05 0 1 1 20.92 79.32" fill="none" stroke="#1574b5" stroke-width="4.5"/><path d="M21.42 79.83A41.05 41.05 0 0 1 10.15 42.97" fill="none" stroke="#173f5f" stroke-width="4.5"/><path d="M10.02 43.67A41.05 41.05 0 0 1 30.55 14.90" fill="none" stroke="#5ab2dc" stroke-width="4.5"/><path d="M29.92 15.25A41.05 41.05 0 0 1 50.66 9.75" fill="none" stroke="#eaa02e" stroke-width="4.5"/></svg>
<span style="top:352.40px;font-size:12.8px;line-height:17px;color:#3d3d3d;letter-spacing:0.166px;left:1199.58px;transform:translateX(-50%);">87</span>
<span style="top:370.90px;font-size:7.5px;line-height:11px;color:#444;letter-spacing:0.093px;left:1200.05px;transform:translateX(-50%);">Messages from</span>
<span style="top:381.70px;font-size:7.5px;line-height:11px;color:#444;letter-spacing:0.024px;left:1200.01px;transform:translateX(-50%);">Possible Threats</span>
<svg style="left:1091px;top:-1px;" width="551" height="522" viewBox="1091.0000 -1.0000 551.0000 522.0000"><rect x="1304.500" y="329.900" width="271.500" height="0.800" fill="#e6e6e6"/><rect x="1304.500" y="364.800" width="271.500" height="0.800" fill="#e6e6e6"/><rect x="1349.60" y="390.39" width="4.250" height="10.21" fill="#1574b5"/><rect x="1356.77" y="387.22" width="4.250" height="13.38" fill="#1574b5"/><rect x="1363.94" y="384.41" width="4.250" height="16.19" fill="#1574b5"/><rect x="1371.12" y="380.54" width="4.250" height="20.06" fill="#1574b5"/><rect x="1378.29" y="382.75" width="4.250" height="17.85" fill="#1574b5"/><rect x="1392.63" y="396.20" width="4.250" height="4.40" fill="#eaa02e"/><rect x="1399.80" y="371.38" width="4.250" height="29.22" fill="#1574b5"/><rect x="1406.98" y="381.77" width="4.250" height="18.83" fill="#1574b5"/><rect x="1406.98" y="378.07" width="4.250" height="3.70" fill="#5ab2dc"/><rect x="1414.15" y="381.77" width="4.250" height="18.83" fill="#1574b5"/><rect x="1414.15" y="366.81" width="4.250" height="14.96" fill="#5ab2dc"/><rect x="1421.32" y="396.20" width="4.250" height="4.40" fill="#173f5f"/><rect x="1421.32" y="359.77" width="4.250" height="36.43" fill="#1574b5"/><rect x="1428.49" y="396.20" width="4.250" height="4.40" fill="#173f5f"/><rect x="1428.49" y="377.37" width="4.250" height="18.83" fill="#1574b5"/><rect x="1428.49" y="374.20" width="4.250" height="3.17" fill="#5ab2dc"/><rect x="1435.66" y="384.41" width="4.250" height="16.19" fill="#1574b5"/><rect x="1442.84" y="390.39" width="4.250" height="10.21" fill="#1574b5"/><rect x="1450.01" y="391.80" width="4.250" height="8.80" fill="#173f5f"/><rect x="1450.01" y="371.38" width="4.250" height="20.42" fill="#1574b5"/><rect x="1457.18" y="375.75" width="4.250" height="24.85" fill="#1574b5"/><rect x="1457.18" y="371.03" width="4.250" height="4.72" fill="#5ab2dc"/><rect x="1464.35" y="391.98" width="4.250" height="8.62" fill="#1574b5"/><rect x="1464.35" y="386.98" width="4.250" height="5.00" fill="#eaa02e"/><rect x="1471.52" y="358.71" width="4.250" height="41.89" fill="#1574b5"/><rect x="1471.52" y="347.27" width="4.250" height="11.44" fill="#eaa02e"/><rect x="1478.70" y="352.38" width="4.250" height="48.22" fill="#1574b5"/><rect x="1485.87" y="391.98" width="4.250" height="8.62" fill="#173f5f"/><rect x="1493.04" y="380.18" width="4.250" height="20.42" fill="#173f5f"/><rect x="1493.04" y="355.54" width="4.250" height="24.64" fill="#1574b5"/><rect x="1493.04" y="350.26" width="4.250" height="5.28" fill="#eaa02e"/><rect x="1500.21" y="386.98" width="4.250" height="13.62" fill="#173f5f"/><rect x="1507.38" y="382.16" width="4.250" height="18.44" fill="#173f5f"/><rect x="1507.38" y="339.00" width="4.250" height="43.16" fill="#1574b5"/><rect x="1514.56" y="371.38" width="4.250" height="29.22" fill="#1574b5"/><rect x="1562.70" y="393.91" width="4.250" height="6.69" fill="#1574b5"/><rect x="1570.10" y="365.40" width="4.250" height="35.20" fill="#1574b5"/><rect x="1304.500" y="400.20000000000005" width="271.500" height="0.900" fill="#555"/><rect x="1307.6" y="400.6" width="0.800" height="2" fill="#777"/><rect x="1358.0" y="400.6" width="0.800" height="2" fill="#777"/><rect x="1412.6999999999998" y="400.6" width="0.800" height="2" fill="#777"/><rect x="1466.5" y="400.6" width="0.800" height="2" fill="#777"/><rect x="1518.8999999999999" y="400.6" width="0.800" height="2" fill="#777"/><rect x="1571.8" y="400.6" width="0.800" height="2" fill="#777"/></svg>
<span style="top:324.80px;font-size:7.5px;line-height:11px;color:#4a4a4a;left:1297.40px;transform:translateX(-100%);">20</span>
<span style="top:358.90px;font-size:7.5px;line-height:11px;color:#4a4a4a;left:1297.40px;transform:translateX(-100%);">10</span>
<span style="top:395.10px;font-size:7.5px;line-height:11px;color:#4a4a4a;left:1297.40px;transform:translateX(-100%);">0</span>
<span style="top:405.70px;font-size:7.5px;line-height:11px;color:#4a4a4a;letter-spacing:0.320px;left:1308.16px;transform:translateX(-50%);">11/06</span>
<span style="top:405.70px;font-size:7.5px;line-height:11px;color:#4a4a4a;letter-spacing:0.320px;left:1358.56px;transform:translateX(-50%);">11/12</span>
<span style="top:405.70px;font-size:7.5px;line-height:11px;color:#4a4a4a;letter-spacing:0.320px;left:1413.26px;transform:translateX(-50%);">11/18</span>
<span style="top:405.70px;font-size:7.5px;line-height:11px;color:#4a4a4a;letter-spacing:0.320px;left:1467.06px;transform:translateX(-50%);">11/24</span>
<span style="top:405.70px;font-size:7.5px;line-height:11px;color:#4a4a4a;letter-spacing:0.180px;left:1519.39px;transform:translateX(-50%);">12/02</span>
<span style="top:405.70px;font-size:7.5px;line-height:11px;color:#4a4a4a;letter-spacing:0.180px;left:1564.79px;transform:translateX(-50%);">12/06</span>
<svg style="left:1189px;top:449px;" width="11" height="11" viewBox="-5.5000 -5.6000 11.0000 11.0000"><circle cx="0" cy="0" r="2.85" fill="#173f5f"/></svg>
<span style="top:449.30px;font-size:7.5px;line-height:11px;color:#444;letter-spacing:0.031px;left:1203.80px;">Moved to Trash</span>
<span style="top:461.60px;font-size:10px;line-height:14px;color:#3d4852;letter-spacing:0.375px;left:1203.80px;">51</span>
<svg style="left:1273px;top:449px;" width="11" height="11" viewBox="-5.8000 -5.6000 11.0000 11.0000"><circle cx="0" cy="0" r="2.85" fill="#1574b5"/></svg>
<span style="top:449.30px;font-size:7.5px;line-height:11px;color:#1c78b8;letter-spacing:0.047px;left:1288.10px;">Moved to Spam</span>
<span style="top:461.60px;font-size:10px;line-height:14px;color:#1c78b8;letter-spacing:0.375px;left:1288.10px;">16</span>
<svg style="left:1359px;top:449px;" width="11" height="11" viewBox="-5.7000 -5.6000 11.0000 11.0000"><circle cx="0" cy="0" r="2.85" fill="#5ab2dc"/></svg>
<span style="top:449.30px;font-size:7.5px;line-height:11px;color:#5ab2dc;letter-spacing:0.042px;left:1374.30px;">Moved to Custom Folder</span>
<span style="top:461.60px;font-size:10px;line-height:14px;color:#5ab2dc;letter-spacing:0.375px;left:1374.30px;">10</span>
<svg style="left:1469px;top:449px;" width="11" height="11" viewBox="-5.8000 -5.6000 11.0000 11.0000"><circle cx="0" cy="0" r="2.85" fill="#eaa02e"/></svg>
<span style="top:449.30px;font-size:7.5px;line-height:11px;color:#e9a233;letter-spacing:0.042px;left:1484.10px;">Monitored Only</span>
<span style="top:461.60px;font-size:10px;line-height:14px;color:#e9a233;letter-spacing:0.375px;left:1484.10px;">13</span>
<div style="left:1111.90px;top:528.30px;width:508.90px;height:570.10px;background:#fff;box-shadow:0 0 3px rgba(150,170,190,.28);"></div>
<span style="top:548.40px;font-size:16.5px;line-height:22px;color:#454545;letter-spacing:-0.375px;left:1132.20px;">Message Volume</span>
<div style="left:1486.40px;top:548.20px;width:114.50px;height:22.90px;background:#e5f0f8;border-radius:11.4px;"></div>
<svg style="left:1494px;top:554px;" width="10" height="11" viewBox="-5.0000 -5.4500 10.0000 11.0000"><g fill="#1c6ea6"><rect x="-2.600" y="-2.200" width="5.200" height="5" rx="0.500"/><rect x="-1.800" y="-3.200" width="0.900" height="1.600"/><rect x="0.900" y="-3.200" width="0.900" height="1.600"/></g><rect x="-2" y="-0.700" width="4" height="0.500" fill="#e5f0f8"/></svg>
<span style="top:554.05px;font-size:8.4px;line-height:12px;color:#2373a8;letter-spacing:0.288px;left:1507.30px;">11/06/19</span>
<svg style="left:1544px;top:554px;" width="10" height="11" viewBox="-5.0000 -5.6500 10.0000 11.0000"><path d="M-2.600 0H2.200M0.200-2.100 2.300 0 0.200 2.100" fill="none" stroke="#1c6ea6" stroke-width="1.150"/></svg>
<span style="top:554.05px;font-size:8.4px;line-height:12px;color:#2373a8;letter-spacing:0.213px;left:1557.60px;">12/06/19</span>
<span style="top:599.80px;font-size:6.5px;line-height:10px;color:#444;font-weight:700;letter-spacing:0.721px;left:1142.50px;">UNVERIFIED DOMAINS (51)</span>
<span style="top:599.80px;font-size:6.5px;line-height:10px;color:#7d7d7d;letter-spacing:0.695px;left:1263.50px;">UNVERIFIED CONTACTS (23)</span>
<span style="top:599.80px;font-size:6.5px;line-height:10px;color:#7d7d7d;letter-spacing:0.730px;left:1392.60px;">IN REVIEW DOMAINS (12)</span>
<div style="left:1132.20px;top:615.80px;width:120.70px;height:1.50px;background:#444;"></div>
<span style="top:630.60px;font-size:6.5px;line-height:10px;color:#7d7d7d;letter-spacing:0.774px;left:1141.50px;">VERIFIED DOMAINS (108,453)</span>
<span style="top:630.60px;font-size:6.5px;line-height:10px;color:#7d7d7d;letter-spacing:0.733px;left:1277.80px;">VERIFIED CONTACTS (50,333)</span>
<div style="left:1132.20px;top:648.00px;width:468.70px;height:1.00px;background:#e2e4e6;"></div>
<div style="left:1132.00px;top:672.00px;width:469.00px;height:33.00px;background:#fff;box-sizing:border-box;border:1px solid #e9ebed;"></div>
<svg style="left:1139px;top:681px;" width="15" height="15" viewBox="-7.8000 -7.9000 15.0000 15.0000"><g transform="scale(0.88)"><circle cx="-1" cy="-1" r="3.600" fill="none" stroke="#aaa" stroke-width="1.600"/><path d="M1.800 1.800 4.600 4.600" stroke="#aaa" stroke-width="1.700" stroke-linecap="round"/></g></svg>
<span style="top:681.70px;font-size:9.5px;line-height:13px;color:#b0b0b0;letter-spacing:0.278px;left:1160.40px;">Search</span>
<div style="left:1536.60px;top:681.00px;width:1.00px;height:15.00px;background:#e2e2e2;"></div>
<svg style="left:1543px;top:682px;" width="13" height="13" viewBox="-6.5000 -6.2000 13.0000 13.0000"><g fill="#666"><rect x="-4" y="-3.400" width="8" height="1.100"/><rect x="-2.700" y="-0.600" width="5.400" height="1.100"/><rect x="-1.200" y="2.200" width="2.400" height="1.100"/></g></svg>
<span style="top:683.20px;font-size:6.5px;line-height:10px;color:#606060;font-weight:700;letter-spacing:0.548px;left:1562.40px;">FILTERS</span>
<span style="top:724.60px;font-size:7.5px;line-height:11px;color:#444;letter-spacing:0.302px;left:1132.20px;">1-10 of 51</span>
<span style="top:753.80px;font-size:7.5px;line-height:11px;color:#3f3f3f;font-weight:700;letter-spacing:0.064px;left:1140.80px;">Sending Domain</span>
<span style="top:753.80px;font-size:7.5px;line-height:11px;color:#3f3f3f;font-weight:700;letter-spacing:0.211px;left:1306.00px;">Volume</span>
<span style="top:753.80px;font-size:7.5px;line-height:11px;color:#3f3f3f;font-weight:700;letter-spacing:0.231px;left:1392.60px;">Mailboxes Affected</span>
<span style="top:753.80px;font-size:7.5px;line-height:11px;color:#3f3f3f;font-weight:700;letter-spacing:0.159px;left:1497.40px;">Policy Action Taken</span>
<div style="left:1132.20px;top:771.80px;width:468.70px;height:2.00px;background:#8a8a8a;"></div>
<div style="left:1297.70px;top:755.80px;width:1.00px;height:16.00px;background:#eff1f3;"></div>
<div style="left:1384.30px;top:755.80px;width:1.00px;height:16.00px;background:#eff1f3;"></div>
<div style="left:1488.80px;top:755.80px;width:1.00px;height:16.00px;background:#eff1f3;"></div>
<span style="top:780.80px;font-size:7.5px;line-height:11px;color:#525252;letter-spacing:0.389px;left:1140.80px;">amazon-audibill.com</span>
<span style="top:780.60px;font-size:8px;line-height:12px;color:#666;left:1306.00px;">12</span>
<span style="top:780.60px;font-size:8px;line-height:12px;color:#666;left:1392.60px;">3</span>
<svg style="left:1495px;top:781px;" width="10" height="11" viewBox="-5.0000 -5.5000 10.0000 11.0000"><circle cx="0" cy="0" r="2.85" fill="#1574b5"/></svg>
<div style="left:1132.20px;top:799.20px;width:468.70px;height:1.00px;background:#f3f4f5;"></div>
<span style="top:807.33px;font-size:7.5px;line-height:11px;color:#525252;letter-spacing:0.414px;left:1140.80px;">whatspp-app.com</span>
<span style="top:807.13px;font-size:8px;line-height:12px;color:#666;left:1306.00px;">10</span>
<span style="top:807.13px;font-size:8px;line-height:12px;color:#666;left:1392.60px;">1</span>
<svg style="left:1495px;top:808px;" width="10" height="11" viewBox="-5.0000 -5.0300 10.0000 11.0000"><circle cx="0" cy="0" r="2.85" fill="#1574b5"/></svg>
<div style="left:1132.20px;top:825.73px;width:468.70px;height:1.00px;background:#f3f4f5;"></div>
<span style="top:833.86px;font-size:7.5px;line-height:11px;color:#525252;letter-spacing:0.375px;left:1140.80px;">concast-processing-center.com</span>
<span style="top:833.66px;font-size:8px;line-height:12px;color:#666;left:1306.00px;">8</span>
<span style="top:833.66px;font-size:8px;line-height:12px;color:#666;left:1392.60px;">2</span>
<svg style="left:1495px;top:834px;" width="10" height="11" viewBox="-5.0000 -5.5600 10.0000 11.0000"><circle cx="0" cy="0" r="2.85" fill="#173f5f"/></svg>
<svg style="left:1502px;top:834px;" width="11" height="11" viewBox="-5.8000 -5.5600 11.0000 11.0000"><circle cx="0" cy="0" r="2.85" fill="#1574b5"/></svg>
<div style="left:1132.20px;top:852.26px;width:468.70px;height:1.00px;background:#f3f4f5;"></div>
<span style="top:860.39px;font-size:7.5px;line-height:11px;color:#525252;letter-spacing:0.427px;left:1140.80px;">weboutlook.net</span>
<span style="top:860.19px;font-size:8px;line-height:12px;color:#666;left:1306.00px;">5</span>
<span style="top:860.19px;font-size:8px;line-height:12px;color:#666;left:1392.60px;">68</span>
<svg style="left:1495px;top:861px;" width="10" height="11" viewBox="-5.0000 -5.0900 10.0000 11.0000"><circle cx="0" cy="0" r="2.85" fill="#173f5f"/></svg>
<svg style="left:1502px;top:861px;" width="11" height="11" viewBox="-5.8000 -5.0900 11.0000 11.0000"><circle cx="0" cy="0" r="2.85" fill="#5ab2dc"/></svg>
<svg style="left:1510px;top:861px;" width="11" height="11" viewBox="-5.6000 -5.0900 11.0000 11.0000"><circle cx="0" cy="0" r="2.85" fill="#eaa02e"/></svg>
<div style="left:1132.20px;top:878.79px;width:468.70px;height:1.00px;background:#f3f4f5;"></div>
<span style="top:886.92px;font-size:7.5px;line-height:11px;color:#525252;letter-spacing:0.403px;left:1140.80px;">vivo-comm.net</span>
<span style="top:886.72px;font-size:8px;line-height:12px;color:#666;left:1306.00px;">5</span>
<span style="top:886.72px;font-size:8px;line-height:12px;color:#666;left:1392.60px;">178</span>
<svg style="left:1495px;top:887px;" width="10" height="11" viewBox="-5.0000 -5.6200 10.0000 11.0000"><circle cx="0" cy="0" r="2.85" fill="#1574b5"/></svg>
<svg style="left:1502px;top:887px;" width="11" height="11" viewBox="-5.8000 -5.6200 11.0000 11.0000"><circle cx="0" cy="0" r="2.85" fill="#a9a9a9"/></svg>
<svg style="left:1510px;top:887px;" width="11" height="11" viewBox="-5.6000 -5.6200 11.0000 11.0000"><circle cx="0" cy="0" r="2.85" fill="#eaa02e"/></svg>
<div style="left:1132.20px;top:905.32px;width:468.70px;height:1.00px;background:#f3f4f5;"></div>
<span style="top:913.45px;font-size:7.5px;line-height:11px;color:#525252;letter-spacing:0.438px;left:1140.80px;">viadocusign.com</span>
<span style="top:913.25px;font-size:8px;line-height:12px;color:#666;left:1306.00px;">4</span>
<span style="top:913.25px;font-size:8px;line-height:12px;color:#666;left:1392.60px;">4,322</span>
<svg style="left:1496px;top:914px;" width="10" height="11" viewBox="-5.0000 -5.1500 10.0000 11.0000"><circle cx="0" cy="0" r="2.85" fill="#173f5f"/></svg>
<svg style="left:1503px;top:914px;" width="11" height="11" viewBox="-5.8000 -5.1500 11.0000 11.0000"><circle cx="0" cy="0" r="2.85" fill="#1574b5"/></svg>
<svg style="left:1511px;top:914px;" width="11" height="11" viewBox="-5.6000 -5.1500 11.0000 11.0000"><circle cx="0" cy="0" r="2.85" fill="#5ab2dc"/></svg>
<div style="left:1132.20px;top:931.85px;width:468.70px;height:1.00px;background:#f3f4f5;"></div>
<span style="top:939.98px;font-size:7.5px;line-height:11px;color:#525252;letter-spacing:0.473px;left:1140.80px;">alerts-microsoft.com</span>
<span style="top:939.78px;font-size:8px;line-height:12px;color:#666;left:1306.00px;">3</span>
<span style="top:939.78px;font-size:8px;line-height:12px;color:#666;left:1392.60px;">10</span>
<svg style="left:1495px;top:940px;" width="10" height="11" viewBox="-5.0000 -5.6800 10.0000 11.0000"><circle cx="0" cy="0" r="2.85" fill="#1574b5"/></svg>
<div style="left:1132.20px;top:958.38px;width:468.70px;height:1.00px;background:#f3f4f5;"></div>
<span style="top:966.51px;font-size:7.5px;line-height:11px;color:#525252;letter-spacing:0.377px;left:1140.80px;">creditkarna-online.com</span>
<span style="top:966.31px;font-size:8px;line-height:12px;color:#666;left:1306.00px;">2</span>
<span style="top:966.31px;font-size:8px;line-height:12px;color:#666;left:1392.60px;">1</span>
<svg style="left:1495px;top:967px;" width="10" height="11" viewBox="-5.0000 -5.2100 10.0000 11.0000"><circle cx="0" cy="0" r="2.85" fill="#1574b5"/></svg>
<div style="left:1132.20px;top:984.91px;width:468.70px;height:1.00px;background:#f3f4f5;"></div>
<span style="top:993.04px;font-size:7.5px;line-height:11px;color:#525252;letter-spacing:0.366px;left:1140.80px;">ups-us-shipping.com</span>
<span style="top:992.84px;font-size:8px;line-height:12px;color:#666;left:1306.00px;">1</span>
<span style="top:992.84px;font-size:8px;line-height:12px;color:#666;left:1392.60px;">4</span>
<svg style="left:1495px;top:993px;" width="10" height="11" viewBox="-5.0000 -5.7400 10.0000 11.0000"><circle cx="0" cy="0" r="2.85" fill="#5ab2dc"/></svg>
<div style="left:1132.20px;top:1011.44px;width:468.70px;height:1.00px;background:#f3f4f5;"></div>
<span style="top:1019.57px;font-size:7.5px;line-height:11px;color:#525252;letter-spacing:0.335px;left:1140.80px;">apple-logins.net</span>
<span style="top:1019.37px;font-size:8px;line-height:12px;color:#666;left:1306.00px;">1</span>
<span style="top:1019.37px;font-size:8px;line-height:12px;color:#666;left:1392.60px;">38</span>
<svg style="left:1495px;top:1020px;" width="10" height="11" viewBox="-5.0000 -5.2700 10.0000 11.0000"><circle cx="0" cy="0" r="2.85" fill="#173f5f"/></svg>
<svg style="left:1502px;top:1020px;" width="11" height="11" viewBox="-5.8000 -5.2700 11.0000 11.0000"><circle cx="0" cy="0" r="2.85" fill="#5ab2dc"/></svg>
<div style="left:1132.20px;top:1037.97px;width:468.70px;height:1.00px;background:#f3f4f5;"></div>
<svg style="left:1336px;top:754px;" width="10" height="11" viewBox="-5.0000 -5.4000 10.0000 11.0000"><path d="M0-2.600V2.200M-2 0.300 0 2.300 2 0.300" fill="none" stroke="#3e9ad6" stroke-width="0.900"/></svg>
<svg style="left:1416px;top:1060px;" width="13" height="13" viewBox="-6.8000 -6.4000 13.0000 13.0000"><path d="M1.1 -2.2 L-1.1 0 L1.1 2.2" fill="none" stroke="#444" stroke-width="1.2"/></svg>
<div style="left:1440.30px;top:1058.70px;width:15.40px;height:15.40px;background:#e5f0f8;border-radius:50%;"></div>
<span style="top:1060.80px;font-size:8px;line-height:12px;color:#1c6ea6;left:1448.00px;transform:translateX(-50%);">1</span>
<span style="top:1060.80px;font-size:8px;line-height:12px;color:#707070;left:1472.20px;transform:translateX(-50%);">2</span>
<span style="top:1060.80px;font-size:8px;line-height:12px;color:#707070;left:1496.40px;transform:translateX(-50%);">3</span>
<span style="top:1060.80px;font-size:8px;line-height:12px;color:#707070;left:1520.90px;transform:translateX(-50%);">4</span>
<span style="top:1060.80px;font-size:8px;line-height:12px;color:#707070;left:1545.20px;transform:translateX(-50%);">5</span>
<span style="top:1060.80px;font-size:8px;line-height:12px;color:#707070;left:1569.40px;transform:translateX(-50%);">6</span>
<svg style="left:1589px;top:1060px;" width="13" height="13" viewBox="-6.2000 -6.4000 13.0000 13.0000"><path d="M-1.1 -2.2 L1.1 0 L-1.1 2.2" fill="none" stroke="#444" stroke-width="1.2"/></svg>
<div style="left:1111.90px;top:1118.60px;width:508.90px;height:60.00px;background:#fff;box-shadow:0 0 3px rgba(150,170,190,.28);"></div>
</div></body></html>
